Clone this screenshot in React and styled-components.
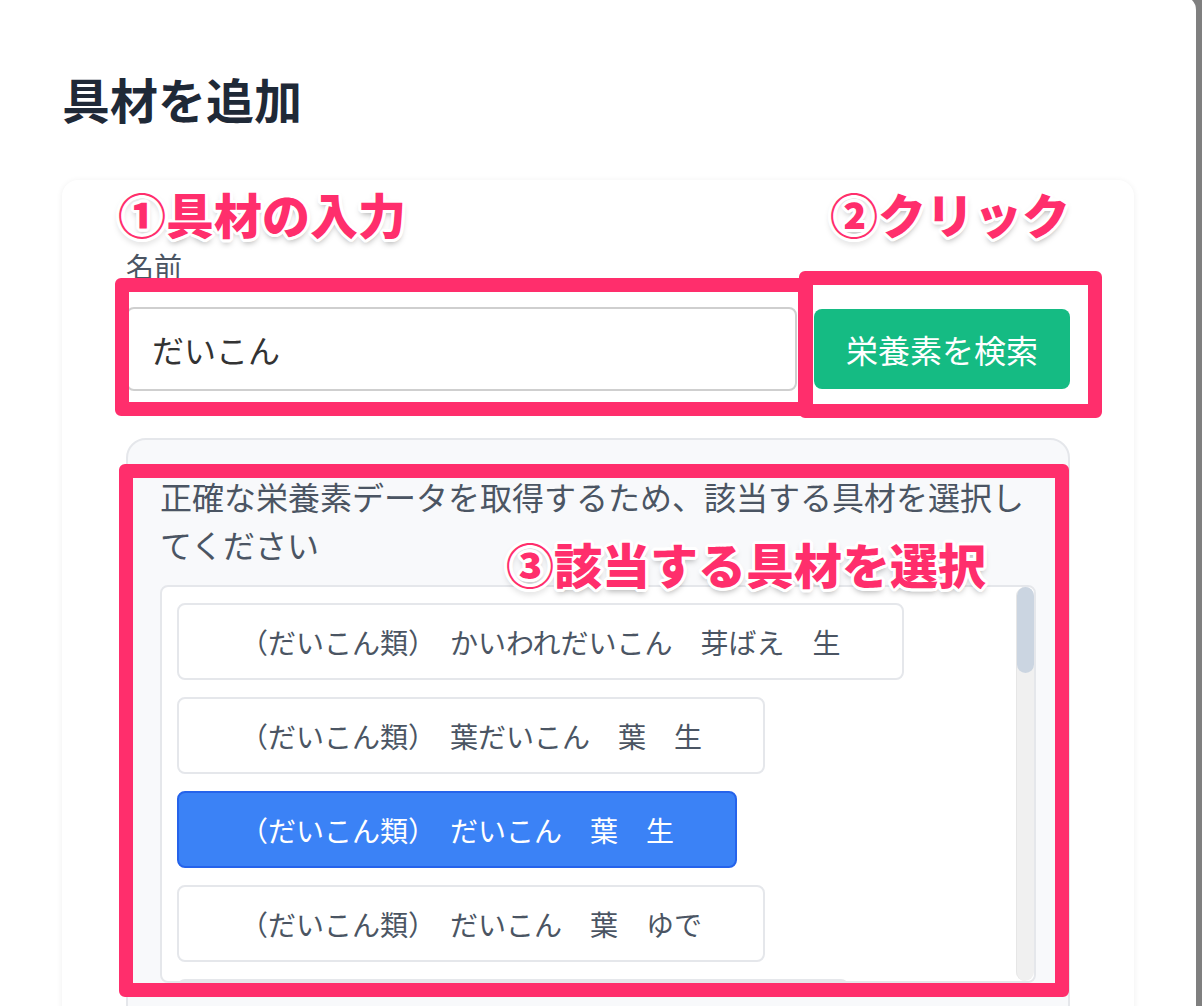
import React from "react";
import styled, { createGlobalStyle } from "styled-components";

const GlobalStyle = createGlobalStyle`
  html, body {
    margin: 0;
    padding: 0;
    overflow: hidden;
    background: #7f7f7f;
  }
  body {
    font-family: "Noto Sans CJK JP", "Noto Sans", sans-serif;
  }
  * { box-sizing: border-box; }
`;

const OX = 8;
const OY = 4;

const Modal = styled.div`
  position: relative;
  margin: -${OY}px 0 0 -${OX}px;
  width: 1204px;
  min-height: 1040px;
  background: #ffffff;
  border-radius: 14px;
  padding: 70px 62px 0 70px;
`;

const Title = styled.h2`
  margin: 0 0 50px;
  font-size: 48px;
  line-height: 64px;
  font-weight: 700;
  color: #1f2937;
`;

const Card = styled.div`
  background: #ffffff;
  border-radius: 16px;
  box-shadow: 0 1px 6px rgba(0, 0, 0, 0.07);
  padding: 66px 64px 64px;
  min-height: 900px;
`;

const Label = styled.label`
  display: block;
  font-size: 28px;
  line-height: 40px;
  color: #4b5563;
  margin-bottom: 21px;
`;

const Row = styled.div`
  display: flex;
  align-items: center;
  gap: 17px;
`;

const Input = styled.input`
  flex: 1;
  min-width: 0;
  height: 84px;
  border: 2px solid #cfcfcf;
  border-radius: 8px;
  padding: 0 24px;
  font-family: inherit;
  font-size: 32px;
  color: #333333;
  background: #ffffff;
  outline: none;
`;

const SearchButton = styled.button`
  height: 80px;
  padding: 0 32px;
  border: none;
  border-radius: 8px;
  background: #15bb83;
  color: #ffffff;
  font-family: inherit;
  font-size: 32px;
  white-space: nowrap;
  cursor: pointer;
`;

const Panel = styled.div`
  margin-top: 47px;
  background: #f8f9fb;
  border: 2px solid #e5e7eb;
  border-radius: 20px;
  padding: 32px;
  min-height: 700px;
`;

const Hint = styled.p`
  margin: 0 0 17px;
  font-size: 32px;
  line-height: 48px;
  color: #4b5563;
`;

const ListBox = styled.div`
  height: 398px;
  background: #ffffff;
  border: 2px solid #e5e7eb;
  border-radius: 8px;
  display: flex;
  overflow: hidden;
`;

const Items = styled.div`
  flex: 1;
  min-width: 0;
  overflow: hidden;
  padding: 16px 15px;
  display: flex;
  flex-direction: column;
  align-items: flex-start;
  gap: 17px;
`;

const ScrollTrack = styled.div`
  flex: none;
  width: 18px;
  background: #f0f0f0;
  border-left: 1px solid #e6e6e6;
  border-radius: 9px;
  display: flex;
  flex-direction: column;
`;

const ScrollThumb = styled.div`
  flex: none;
  height: 86px;
  border-radius: 9px;
  background: #cbd5e1;
`;

const Item = styled.button`
  flex: none;
  height: 77px;
  padding: 0 61px;
  border-radius: 8px;
  border: 2px solid ${(p) => (p.$selected ? "#2563eb" : "#e5e7eb")};
  background: ${(p) => (p.$selected ? "#3b82f6" : "#ffffff")};
  color: ${(p) => (p.$selected ? "#ffffff" : "#4b5563")};
  font-family: inherit;
  font-size: 28px;
  line-height: 40px;
  white-space: nowrap;
  text-align: center;
  cursor: pointer;
`;

const Callout = styled.div`
  position: absolute;
  left: ${(p) => p.$x + OX}px;
  top: ${(p) => p.$y + OY}px;
  width: ${(p) => p.$w}px;
  height: ${(p) => p.$h}px;
  border: 14px solid #ff2e6c;
  border-radius: 6px;
  pointer-events: none;
`;

const outline = [
  "3px 0", "-3px 0", "0 3px", "0 -3px",
  "2px 2px", "-2px 2px", "2px -2px", "-2px -2px",
  "3px 1px", "-3px 1px", "3px -1px", "-3px -1px",
  "1px 3px", "-1px 3px", "1px -3px", "-1px -3px",
]
  .map((o) => `${o} 0 #ffffff`)
  .join(", ");

const Note = styled.span`
  position: absolute;
  left: ${(p) => p.$x + OX}px;
  top: ${(p) => p.$y + OY}px;
  font-size: 48px;
  line-height: 1;
  font-weight: 900;
  color: #ff2e6c;
  white-space: nowrap;
  text-shadow: ${outline}, 0 4px 6px rgba(0, 0, 0, 0.35);
  pointer-events: none;
`;

const foods = [
  "（だいこん類）　かいわれだいこん　芽ばえ　生",
  "（だいこん類）　葉だいこん　葉　生",
  "（だいこん類）　だいこん　葉　生",
  "（だいこん類）　だいこん　葉　ゆで",
  "（だいこん類）　だいこん　根　皮つき　生",
  "（だいこん類）　だいこん　根　皮つき　ゆで",
  "（だいこん類）　だいこん　根　皮なし　生",
];

export default function App() {
  return (
    <>
      <GlobalStyle />
      <Modal>
        <Title>具材を追加</Title>
        <Card>
          <Label htmlFor="name">名前</Label>
          <Row>
            <Input id="name" defaultValue="だいこん" />
            <SearchButton>栄養素を検索</SearchButton>
          </Row>
          <Panel>
            <Hint>
              正確な栄養素データを取得するため、該当する具材を選択してください
            </Hint>
            <ListBox>
              <Items>
                {foods.map((f, i) => (
                  <Item key={f} $selected={i === 2}>
                    {f}
                  </Item>
                ))}
              </Items>
              <ScrollTrack>
                <ScrollThumb />
              </ScrollTrack>
            </ListBox>
          </Panel>
        </Card>

        <Callout $x={115} $y={278} $w={697} $h={138} />
        <Callout $x={799} $y={271} $w={303} $h={147} />
        <Callout $x={119} $y={464} $w={950} $h={533} />

        <Note $x={118} $y={189}>①具材の入力</Note>
        <Note $x={830} $y={189}>②クリック</Note>
        <Note $x={506} $y={539}>③該当する具材を選択</Note>
      </Modal>
    </>
  );
}
